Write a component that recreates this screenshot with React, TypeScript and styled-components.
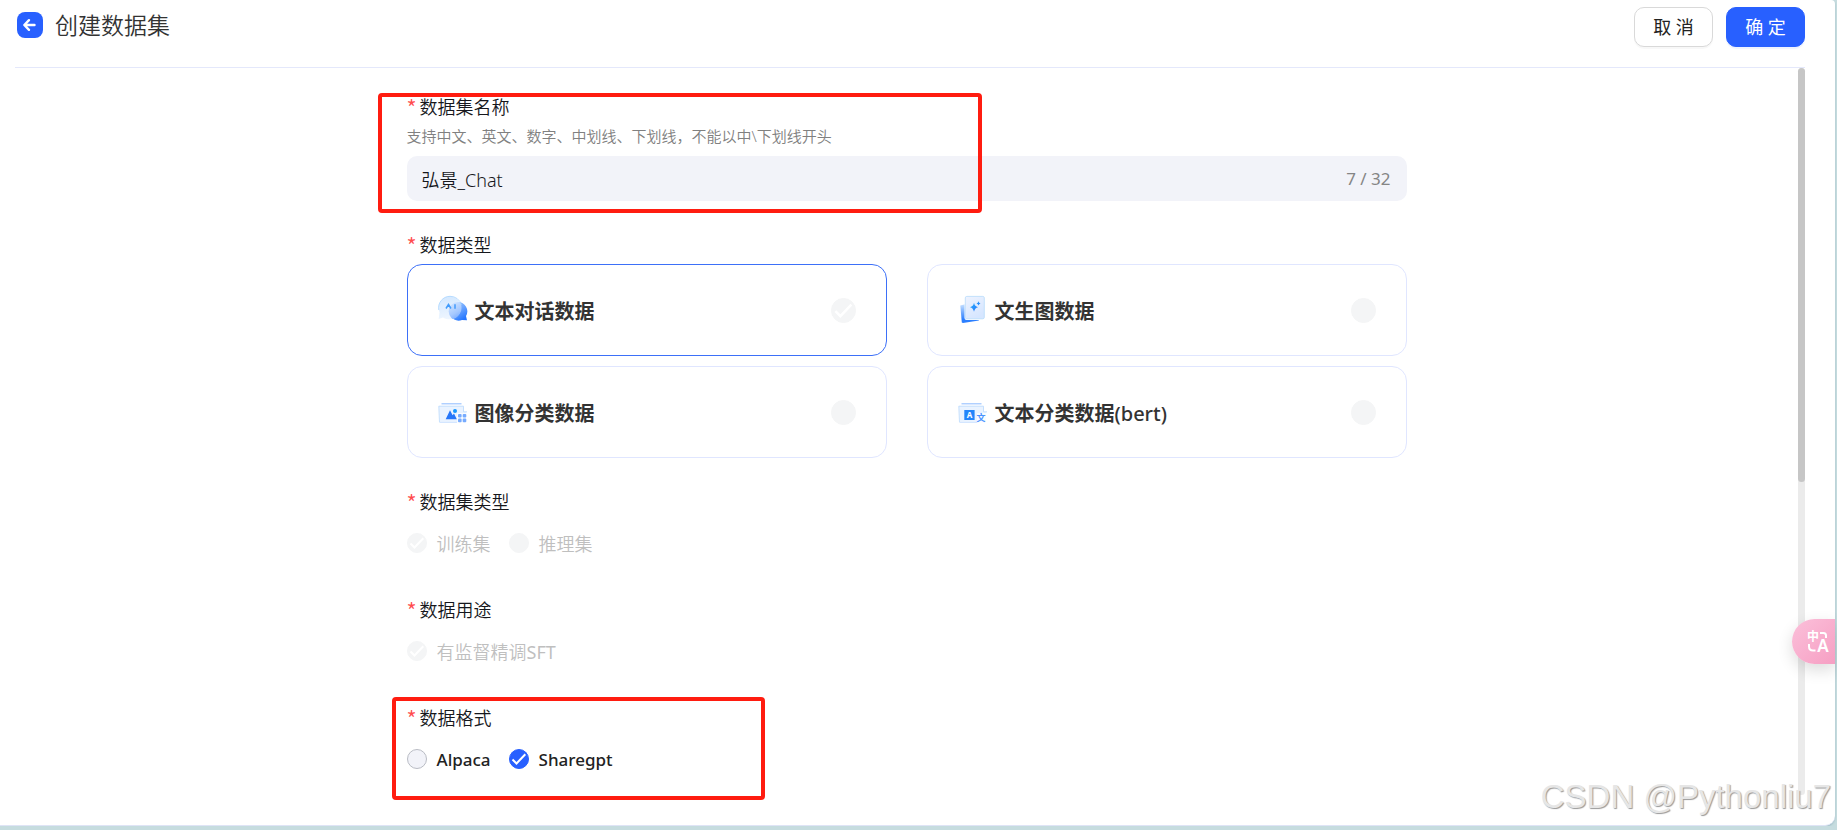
import React, { useState } from 'react';
import styled, { createGlobalStyle, css } from 'styled-components';

const GlobalStyle = createGlobalStyle`
  *, *::before, *::after { box-sizing: border-box; }
  body {
    margin: 0;
    background: #c6dcdf;
    color: #16171c;
    font-family: 'Noto Sans', 'Noto Sans CJK SC', sans-serif;
    font-size: 18px;
  }
  button, input { font: inherit; color: inherit; }
`;

const Window = styled.div`
  position: relative;
  display: flex;
  flex-direction: column;
  height: calc(100vh - 4px);
  margin-right: 2px;
  padding: 0 30px 0 15px;
  background: #fff;
  border-bottom: 1px solid #dfe4f6;
  border-radius: 0 4px 10px 0;
  box-shadow: 0 1px 2px #9dbcc4;
`;

const Header = styled.header`
  display: flex;
  flex: none;
  align-items: flex-start;
  justify-content: space-between;
  height: 68px;
  padding-top: 7px;
  border-bottom: 1px solid #e4e8fb;
`;

const Heading = styled.div`
  display: flex;
  align-items: center;
  gap: 12px;
  height: 36px;
  padding-left: 2px;
`;

const BackButton = styled.button`
  display: grid;
  place-items: center;
  width: 26px;
  height: 26px;
  padding: 0;
  border: 0;
  border-radius: 8px;
  background: #2860ff;
  color: #fff;
`;

const Title = styled.h1`
  margin: 0;
  color: #333;
  font-size: 23px;
  font-weight: 350;
  line-height: 32px;
`;

const Actions = styled.div`
  display: flex;
  gap: 13px;
`;

const ActionButton = styled.button<{ $primary?: boolean }>`
  width: 79px;
  height: 40px;
  padding: 0;
  border: 1px solid ${p => (p.$primary ? '#2860ff' : '#d9d9d9')};
  border-radius: 10px;
  background: ${p => (p.$primary ? '#2860ff' : '#fff')};
  color: ${p => (p.$primary ? '#fff' : '#222')};
  box-shadow: 0 2px 1px ${p => (p.$primary ? '#eef3ff' : '#f8f8f8')};
  line-height: 38px;
`;

const Body = styled.div`
  display: flex;
  flex: 1;
  min-height: 0;
`;

const Form = styled.form`
  display: flex;
  flex: 1;
  flex-direction: column;
  gap: 29px;
  width: 100%;
  max-width: 1000px;
  margin: 0 auto;
  padding-top: 24px;
`;

const Track = styled.div`
  flex: none;
  width: 7px;
  margin-bottom: 30px;
  border-radius: 4px;
  background: #ebebeb;
`;

const Thumb = styled.div`
  height: 57%;
  border-radius: 4px;
  background: #c6c6c6;
`;

const Field = styled.fieldset`
  position: relative;
  min-width: 0;
  margin: 0;
  padding: 0;
  border: 0;
`;

const labelStyle = css`
  display: block;
  height: 26px;
  padding: 0;
  font-weight: 350;
  line-height: 26px;
  &::before {
    content: '*';
    display: inline-block;
    width: 13px;
    height: 16px;
    color: #ff4d4f;
    font-family: 'Noto Sans CJK SC', sans-serif;
    font-size: 22px;
    line-height: 30px;
    vertical-align: -3px;
  }
`;

const FieldLabel = styled.label`${labelStyle}`;
const Legend = styled.legend`${labelStyle}`;

const Hint = styled.p`
  margin: 7px 0 8px;
  color: #808080;
  font-size: 15px;
  font-weight: 350;
  line-height: 23px;
`;

const InputBox = styled.div`
  display: flex;
  align-items: center;
  height: 45px;
  padding: 0 16px 0 15px;
  border-radius: 10px;
  background: #f2f3f9;
`;

const NameInput = styled.input`
  flex: 1;
  min-width: 0;
  height: 28px;
  padding: 0;
  border: 0;
  outline: 0;
  background: none;
  font-weight: 350;
`;

const Counter = styled.span`
  color: #858585;
  font-size: 17px;
`;

const Cards = styled.div`
  display: grid;
  grid-template-columns: 1fr 1fr;
  gap: 10px 40px;
  margin-top: 8px;
`;

const Card = styled.label<{ $selected: boolean }>`
  display: flex;
  align-items: center;
  gap: 7px;
  height: 92px;
  padding: 0 30px;
  border: 1px solid ${p => (p.$selected ? '#3d70f8' : '#e0e6ff')};
  border-radius: 15px;
`;

const CardTitle = styled.span`
  flex: 1;
  color: #333;
  font-size: 20px;
  font-weight: 700;
`;

const Latin = styled.span<{ $weight: number }>`
  font-weight: ${p => p.$weight};
`;

const Options = styled.div`
  display: flex;
  align-items: center;
  gap: 18px;
  height: 45px;
  margin-top: 8px;
  padding-bottom: 1px;
`;

const Option = styled.label<{ $disabled?: boolean }>`
  display: flex;
  align-items: center;
  gap: 10px;
  color: ${p => (p.$disabled ? '#bfbfbf' : '#222')};
  font-size: ${p => (p.$disabled ? 18 : 17)}px;
  font-weight: ${p => (p.$disabled ? 350 : 500)};
`;

const RadioBox = styled.span<{ $size: number }>`
  display: grid;
  flex: none;
  width: ${p => p.$size}px;
  height: ${p => p.$size}px;
  > * { grid-area: 1 / 1; }
`;

const RadioInput = styled.input`
  appearance: none;
  width: 100%;
  height: 100%;
  margin: 0;
  border: 1px solid #b9bcc4;
  border-radius: 50%;
  background: #f2f3f9;
  &:checked { border-color: #2860ff; background: #2860ff; }
  &:disabled { border-color: #f4f5f6; background: #f4f5f6; }
`;

const Tick = styled.svg`
  width: 100%;
  height: 100%;
  pointer-events: none;
`;

const Highlight = styled.div<{ $top: number; $left: number; $width: number; $height: number }>`
  position: absolute;
  top: ${p => p.$top}px;
  left: ${p => p.$left}px;
  width: ${p => p.$width}px;
  height: ${p => p.$height}px;
  border: 4px solid #ff1c10;
  border-radius: 4px;
  pointer-events: none;
`;

const TranslateTab = styled.button`
  position: absolute;
  right: 0;
  bottom: 161px;
  display: grid;
  place-items: center;
  width: 43px;
  height: 45px;
  padding: 0 0 0 8px;
  border: 0;
  border-radius: 23px 0 0 23px;
  background: linear-gradient(135deg, #fbc0da, #f69fc3);
  box-shadow: 0 6px 16px rgba(0, 0, 0, 0.14);
`;

const Watermark = styled.span`
  position: absolute;
  right: 4px;
  bottom: 6px;
  color: #e6e6e6;
  font-family: 'Liberation Sans', sans-serif;
  font-size: 33px;
  line-height: 44px;
  text-shadow: 1px 1px 1px #999;
  white-space: nowrap;
  pointer-events: none;
`;

type RadioProps = {
  name: string;
  size?: number;
  checked: boolean;
  disabled?: boolean;
  onChange?: () => void;
};

function Radio({ name, size = 20, checked, disabled, onChange }: RadioProps) {
  return (
    <RadioBox $size={size}>
      <RadioInput type="radio" name={name} checked={checked} disabled={disabled} onChange={onChange ?? (() => {})} />
      {checked && (
        <Tick viewBox="0 0 20 20" fill="none" stroke="#fff" strokeWidth="2">
          <path d="M3.5 10.5 7.5 14.5 16.3 5.3" />
        </Tick>
      )}
    </RadioBox>
  );
}

function ChatIcon() {
  return (
    <svg width="30" height="30" viewBox="0 0 30 30" aria-hidden="true">
      <defs>
        <linearGradient id="chatBack" x1="0" y1="0" x2="0.7" y2="1">
          <stop offset="0" stopColor="#a9d2ff" />
          <stop offset="0.5" stopColor="#74abff" />
          <stop offset="1" stopColor="#2476ff" />
        </linearGradient>
        <linearGradient id="chatFront" x1="0.3" y1="0" x2="0.5" y2="1">
          <stop offset="0" stopColor="#d3e8ff" />
          <stop offset="1" stopColor="#eff6ff" />
        </linearGradient>
        <linearGradient id="chatOverlap" x1="0.2" y1="0" x2="0.8" y2="1">
          <stop offset="0" stopColor="#d0e4ff" />
          <stop offset="0.5" stopColor="#a5c8ff" />
          <stop offset="1" stopColor="#5a97ff" />
        </linearGradient>
        <clipPath id="chatClip"><circle cx="12" cy="12.800" r="11.500" /></clipPath>
      </defs>
      <path d="M20 7a9.300 9.300 0 0 1 8 14l1 4.300-5-.4A9.300 9.300 0 1 1 20 7Z" fill="url(#chatBack)" />
      <path d="M12 1.300A11.500 11.500 0 1 1 5 22.400L.7 24l.8-6.700A11.500 11.500 0 0 1 12 1.300Z" fill="url(#chatFront)" />
      <circle cx="20" cy="16.300" r="9.300" fill="url(#chatOverlap)" clipPath="url(#chatClip)" />
      <path d="M.8 15A11.500 11.500 0 0 1 12 1.300 11.500 11.500 0 0 1 23.400 10" fill="none" stroke="#a8d4ff" strokeWidth="0.8" />
      <path d="M8 13.500 10.500 9.500 13 13.500M17 9.300v4.500" fill="none" stroke="#419bfc" strokeWidth="1.500" />
    </svg>
  );
}

function SparkleIcon() {
  return (
    <svg width="30" height="30" viewBox="0 0 30 30" aria-hidden="true">
      <defs>
        <linearGradient id="sheetBack" x1="0" y1="0" x2="0" y2="1">
          <stop offset="0" stopColor="#c9e2ff" />
          <stop offset="0.8" stopColor="#2c7fff" />
        </linearGradient>
        <linearGradient id="sheetFront" x1="0" y1="0" x2="0.5" y2="1">
          <stop offset="0" stopColor="#eef3ff" />
          <stop offset="1" stopColor="#d6e6ff" />
        </linearGradient>
        <linearGradient id="star" x1="0" y1="0" x2="1" y2="1">
          <stop offset="0" stopColor="#27b4fa" />
          <stop offset="1" stopColor="#286bff" />
        </linearGradient>
      </defs>
      <path d="M2.300 10.500 8 9l13 16.500-16 2.500-1.200-.5Z" fill="url(#sheetBack)" />
      <rect x="6.500" y="1" width="20.500" height="24" rx="2" fill="#fff" />
      <rect x="7.300" y="1.400" width="19" height="22.400" rx="1.500" fill="url(#sheetFront)" stroke="#b6dafa" strokeWidth="0.8" />
      <path d="M16 7.800Q16.700 11.500 20 12.200 16.700 13 16 16.800 15.300 13 12 12.200 15.300 11.500 16 7.800ZM20.500 6.300Q20.900 8 22.500 8.400 20.900 8.800 20.500 10.500 20.100 8.800 18.500 8.400 20.100 8 20.500 6.300Z" fill="url(#star)" />
    </svg>
  );
}

function Folder({ id }: { id: string }) {
  return (
    <>
      <defs>
        <linearGradient id={id} x1="0" y1="0" x2="0" y2="1">
          <stop offset="0" stopColor="#a7cbff" />
          <stop offset="1" stopColor="#c3daff" />
        </linearGradient>
      </defs>
      <rect x="3.500" y="6" width="20" height="1.600" fill={`url(#${id})`} />
      <path d="M.8 9.200H25.500V15H28.500L27.500 25.500H2Z" fill="#eaf3ff" />
      <path d="M1.500 25.500.8 9.200H25.500V14.800H29" fill="none" stroke="#b7d8fc" strokeWidth="0.8" />
      <path d="M2 25.400H19" stroke="#c7deff" strokeWidth="0.8" />
      <path d="M19 26V16H30V27Z" fill="#fff" opacity="0.7" />
    </>
  );
}

function ImageIcon() {
  return (
    <svg width="30" height="30" viewBox="0 0 30 30" aria-hidden="true">
      <Folder id="folderImage" />
      <path d="M7.700 22.300 12 13.200 14.600 18.300 16 16.500 18.800 22.300Z" fill="#2576f9" />
      <circle cx="17" cy="14" r="2" fill="#1697ff" />
      <g fill="#76abff">
        <rect x="20" y="17" width="3.600" height="3.600" rx="1" />
        <rect x="24.700" y="17" width="3.600" height="3.600" rx="1" />
        <rect x="20" y="21.600" width="3.600" height="3.600" rx="1" />
        <rect x="24.700" y="21.600" width="3.600" height="3.600" rx="1" />
      </g>
    </svg>
  );
}

function TextIcon() {
  return (
    <svg width="30" height="30" viewBox="0 0 30 30" aria-hidden="true">
      <Folder id="folderText" />
      <rect x="6.300" y="13" width="10.300" height="10" fill="#2385fb" />
      <text x="11.500" y="21" textAnchor="middle" fill="#fff" fontSize="8" fontWeight="700">A</text>
      <text x="23" y="24.300" textAnchor="middle" fill="#4a93ff" fontSize="9" fontWeight="700">文</text>
    </svg>
  );
}

function TranslateIcon() {
  return (
    <svg width="26" height="28" viewBox="0 0 26 28" fill="none" stroke="#fff" strokeWidth="2" aria-hidden="true">
      <text x="8" y="13" textAnchor="middle" fill="#fff" stroke="none" fontSize="12" fontWeight="700">中</text>
      <text x="18" y="24" textAnchor="middle" fill="#fff" stroke="none" fontSize="17" fontWeight="600">A</text>
      <path d="M15 5h3.500q2.500 0 2.500 2.500V10M4 16v2.500q0 4 4 4H10.500" />
    </svg>
  );
}

const dataTypes = [
  { id: 'chat', title: '文本对话数据', icon: <ChatIcon /> },
  { id: 'text2image', title: '文生图数据', icon: <SparkleIcon /> },
  { id: 'image', title: '图像分类数据', icon: <ImageIcon /> },
  { id: 'bert', title: '文本分类数据', suffix: '(bert)', icon: <TextIcon /> },
];

export default function App() {
  const [name, setName] = useState('弘景_Chat');
  const [format, setFormat] = useState('Sharegpt');

  return (
    <>
      <GlobalStyle />
      <Window>
        <Header>
          <Heading>
            <BackButton type="button" aria-label="返回">
              <svg width="26" height="26" viewBox="0 0 26 26" fill="none" stroke="currentColor" strokeWidth="2.400" strokeLinecap="round" strokeLinejoin="round">
                <path d="M17.500 13H8M12 8.200 7.300 13 12 17.800" />
              </svg>
            </BackButton>
            <Title>创建数据集</Title>
          </Heading>
          <Actions>
            <ActionButton type="button">取 消</ActionButton>
            <ActionButton type="submit" form="dataset" $primary>确 定</ActionButton>
          </Actions>
        </Header>
        <Body>
          <Form id="dataset" onSubmit={e => e.preventDefault()}>
            <Field>
              <FieldLabel htmlFor="name">数据集名称</FieldLabel>
              <Hint>支持中文、英文、数字、中划线、下划线，不能以中\下划线开头</Hint>
              <InputBox>
                <NameInput id="name" maxLength={32} value={name} onChange={e => setName(e.target.value)} />
                <Counter>{name.length} / 32</Counter>
              </InputBox>
              <Highlight $top={1} $left={-29} $width={604} $height={120} />
            </Field>
            <Field>
              <Legend>数据类型</Legend>
              <Cards>
                {dataTypes.map(t => (
                  <Card key={t.id} $selected={t.id === 'chat'}>
                    {t.icon}
                    <CardTitle>
                      {t.title}
                      {t.suffix && <Latin $weight={500}>{t.suffix}</Latin>}
                    </CardTitle>
                    <Radio name="dataType" size={25} checked={t.id === 'chat'} disabled />
                  </Card>
                ))}
              </Cards>
            </Field>
            <Field>
              <Legend>数据集类型</Legend>
              <Options>
                <Option $disabled><Radio name="setType" checked disabled />训练集</Option>
                <Option $disabled><Radio name="setType" checked={false} disabled />推理集</Option>
              </Options>
            </Field>
            <Field>
              <Legend>数据用途</Legend>
              <Options>
                <Option $disabled>
                  <Radio name="usage" checked disabled />
                  <span>有监督精调<Latin $weight={400}>SFT</Latin></span>
                </Option>
              </Options>
            </Field>
            <Field>
              <Legend>数据格式</Legend>
              <Options>
                {['Alpaca', 'Sharegpt'].map(f => (
                  <Option key={f}>
                    <Radio name="format" checked={format === f} onChange={() => setFormat(f)} />
                    {f}
                  </Option>
                ))}
              </Options>
              <Highlight $top={-32} $left={-15} $width={373} $height={103} />
            </Field>
          </Form>
          <Track><Thumb /></Track>
        </Body>
        <TranslateTab type="button" aria-label="翻译"><TranslateIcon /></TranslateTab>
        <Watermark>CSDN @Pythonliu7</Watermark>
      </Window>
    </>
  );
}
